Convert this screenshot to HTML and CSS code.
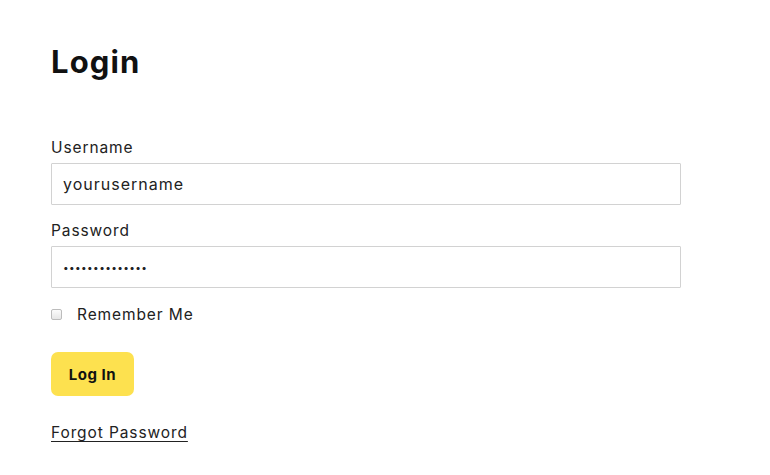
FILE: index.html
```html
<!DOCTYPE html>
<html>
<head>
<meta charset="utf-8">
<link rel="stylesheet" href="styles.css">
</head>
<body>
<main class="login">
  <h1 class="title">Login</h1>
  <form class="form">
    <label class="field">
      <span class="label">Username</span>
      <input class="input" type="text" value="yourusername">
    </label>
    <label class="field">
      <span class="label">Password</span>
      <input class="input password" type="password" value="abcdefghijklmn">
    </label>
    <label class="remember">
      <span class="box"></span>
      <span>Remember Me</span>
    </label>
    <div class="actions">
      <button class="btn" type="button">Log In</button>
    </div>
    <a class="forgot" href="#">Forgot Password</a>
  </form>
</main>
</body>
</html>
```

FILE: styles.css
```css
* { box-sizing: border-box; }
html, body { margin: 0; padding: 0; background: #fff; }
body {
  font-family: Inter, "Noto Sans", "Liberation Sans", sans-serif;
  color: #1a1a1a;
}
.login {
  padding: 42px 0 0 51px;
  width: 681px;
}
.title {
  margin: 0;
  font-size: 31px;
  font-weight: 700;
  letter-spacing: 1.1px;
  line-height: 40px;
  color: #111;
}
.form {
  display: flex;
  flex-direction: column;
  margin-top: 57px;
}
.field {
  display: flex;
  flex-direction: column;
  gap: 6px;
  margin-bottom: 17px;
}
.label {
  font-size: 15.5px;
  letter-spacing: 0.9px;
  line-height: 18px;
  color: #222;
}
.input {
  width: 630px;
  height: 42px;
  border: 1.5px solid #d2d2d2;
  border-radius: 1px;
  padding: 0 11px;
  font-family: inherit;
  font-size: 16px;
  letter-spacing: 1px;
  color: #222;
  background: #fff;
  outline: none;
}
.password {
  font-size: 10px;
  letter-spacing: 0.4px;
}
.remember {
  display: flex;
  align-items: center;
  gap: 15px;
  font-size: 15.5px;
  letter-spacing: 0.9px;
  color: #222;
  height: 18px;
}
.box {
  width: 11px;
  height: 11px;
  border: 1px solid #bcbcbc;
  border-radius: 2px;
  background: linear-gradient(#fbfbfb, #e6e6e6);
}
.actions {
  margin-top: 29px;
}
.btn {
  background: #fde14f;
  border: none;
  border-radius: 7px;
  width: 83px;
  height: 44px;
  font-family: inherit;
  font-size: 15px;
  font-weight: 700;
  letter-spacing: 0.5px;
  color: #111;
  cursor: pointer;
}
.forgot {
  align-self: flex-start;
  margin-top: 27px;
  font-size: 15.5px;
  letter-spacing: 0.9px;
  color: #222;
  text-decoration: underline;
  text-underline-offset: 3px;
}
```
